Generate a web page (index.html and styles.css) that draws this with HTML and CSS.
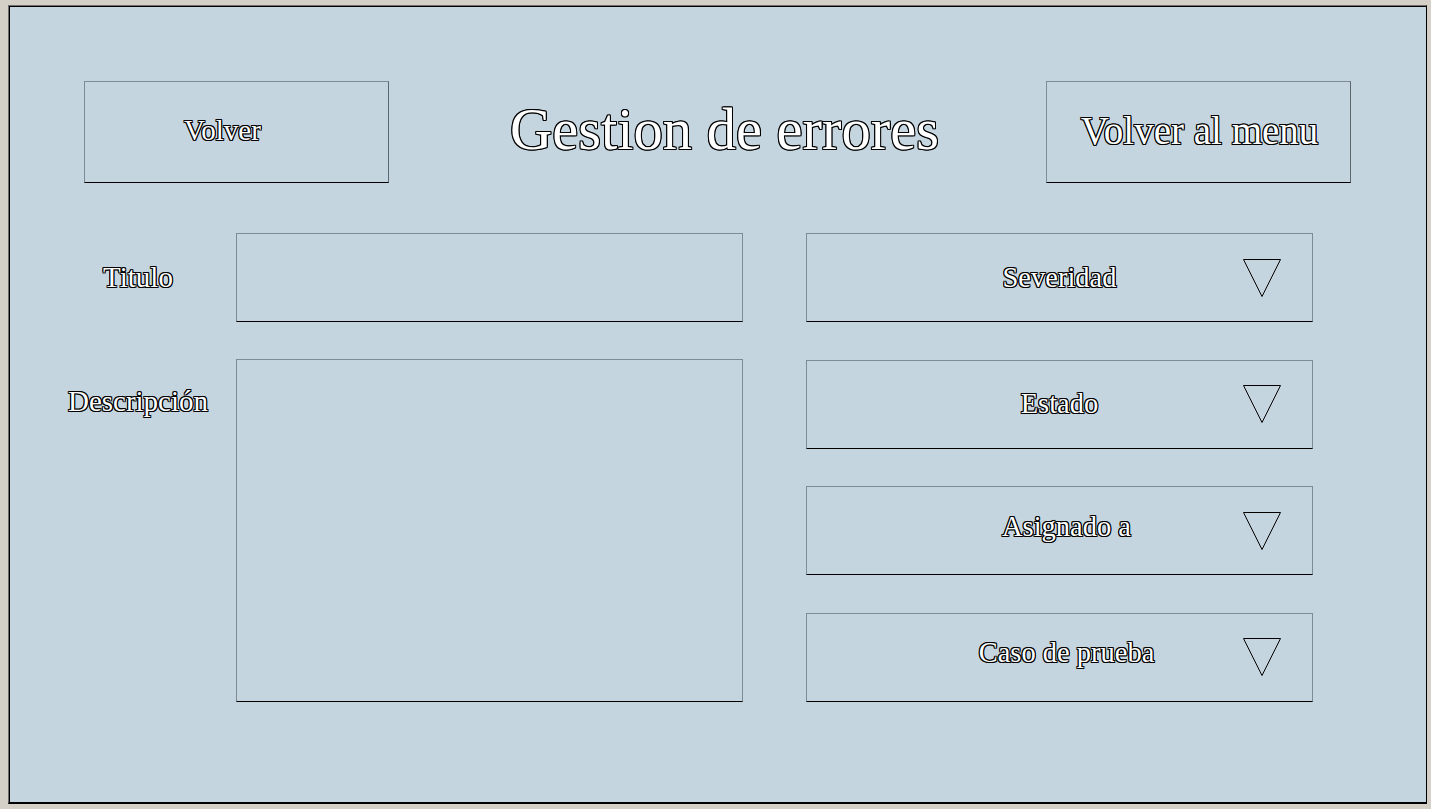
FILE: index.html
```html
<!DOCTYPE html>
<html lang="es">
<head>
<meta charset="utf-8">
<title>Gestion de errores</title>
<link rel="stylesheet" href="styles.css">
</head>
<body>
<div class="panel">
  <header class="header">
    <button class="btn btn-small outline"><span class="btn-text">Volver</span></button>
    <h1 class="title outline">Gestion de errores</h1>
    <button class="btn btn-large outline"><span class="btn-text">Volver al menu</span></button>
  </header>
  <main class="form">
    <div class="left">
      <label class="label outline">Titulo</label>
      <div class="field field-input"></div>
      <label class="label label-desc outline">Descripción</label>
      <div class="field field-area"></div>
    </div>
    <div class="right">
      <div class="field select">
        <span class="spacer"></span>
        <span class="select-text outline">Severidad</span>
        <span class="arrow-cell"><svg class="arrow" width="38" height="38" viewBox="0 0 38 38"><polygon points="0.5,0.5 37.5,0.5 19,37.5" fill="none" stroke="#000" stroke-width="1"/></svg></span>
      </div>
      <div class="field select">
        <span class="spacer"></span>
        <span class="select-text outline">Estado</span>
        <span class="arrow-cell"><svg class="arrow" width="38" height="38" viewBox="0 0 38 38"><polygon points="0.5,0.5 37.5,0.5 19,37.5" fill="none" stroke="#000" stroke-width="1"/></svg></span>
      </div>
      <div class="field select">
        <span class="spacer"></span>
        <span class="select-text shifted outline">Asignado a</span>
        <span class="arrow-cell"><svg class="arrow" width="38" height="38" viewBox="0 0 38 38"><polygon points="0.5,0.5 37.5,0.5 19,37.5" fill="none" stroke="#000" stroke-width="1"/></svg></span>
      </div>
      <div class="field select">
        <span class="spacer"></span>
        <span class="select-text shifted outline">Caso de prueba</span>
        <span class="arrow-cell"><svg class="arrow" width="38" height="38" viewBox="0 0 38 38"><polygon points="0.5,0.5 37.5,0.5 19,37.5" fill="none" stroke="#000" stroke-width="1"/></svg></span>
      </div>
    </div>
  </main>
</div>
</body>
</html>
```
FILE: styles.css
```css
html, body {
  margin: 0;
  padding: 0;
}
body {
  background: #d4d0c8;
  width: 1431px;
  height: 809px;
  overflow: hidden;
  font-family: "Liberation Serif", "Times New Roman", serif;
}
.panel {
  box-sizing: border-box;
  margin: 5px 4px 5px 8px;
  width: 1419px;
  height: 799px;
  background: #c5d5df;
  border-top: 1px solid #6e6e6e;
  border-left: 1px solid #6e6e6e;
  border-right: 1px solid #000;
  border-bottom: 2px solid #000;
  box-shadow: inset 1px 1px 0 #000;
}
.outline {
  color: #fff;
  text-shadow:
    -1px -1px 0 #000, 1px -1px 0 #000, -1px 1px 0 #000, 1px 1px 0 #000,
    0 1px 0 #000, 0 -1px 0 #000, 1px 0 0 #000, -1px 0 0 #000;
}
.header {
  display: flex;
  align-items: center;
  justify-content: space-between;
  padding: 75px 75px 0 75px;
}
.btn {
  box-sizing: border-box;
  width: 305px;
  height: 102px;
  background: transparent;
  border: 1px solid #7d8b94;
  border-bottom-color: #000;
  border-right-color: #5c666d;
  font-family: "Liberation Serif", "Times New Roman", serif;
  padding: 0 0 4px 0;
  margin: 0;
}
.btn-small {
  font-size: 29px;
  padding-right: 28px;
}
.btn-large {
  font-size: 39px;
  padding-left: 2px;
}
.title {
  margin: 0;
  font-size: 58.5px;
  font-weight: normal;
  padding-left: 14px;
  padding-bottom: 6px;
}
.form {
  display: flex;
  gap: 63px;
  padding: 50px 0 0 49px;
}
.left {
  display: grid;
  grid-template-columns: 178px 507px;
  grid-template-rows: 89px 343px;
  row-gap: 37px;
}
.label {
  font-size: 29px;
  height: 89px;
  display: flex;
  align-items: center;
  justify-content: center;
  padding-right: 18px;
}
.label-desc {
  padding-bottom: 4px;
  box-sizing: border-box;
}
.field {
  box-sizing: border-box;
  border: 1px solid #7d8b94;
  border-bottom-color: #000;
}
.field-input {
  height: 89px;
}
.field-area {
  height: 343px;
}
.right {
  display: flex;
  flex-direction: column;
  justify-content: space-between;
  height: 469px;
  width: 507px;
}
.select {
  height: 89px;
  display: grid;
  grid-template-columns: 1fr auto 1fr;
  align-items: center;
}
.select-text {
  font-size: 28.5px;
  white-space: nowrap;
}
.select-text.shifted {
  padding-left: 14px;
  padding-bottom: 8px;
}
.arrow-cell {
  display: flex;
  justify-content: flex-end;
  padding-right: 31px;
}
.arrow {
  display: block;
}
```
